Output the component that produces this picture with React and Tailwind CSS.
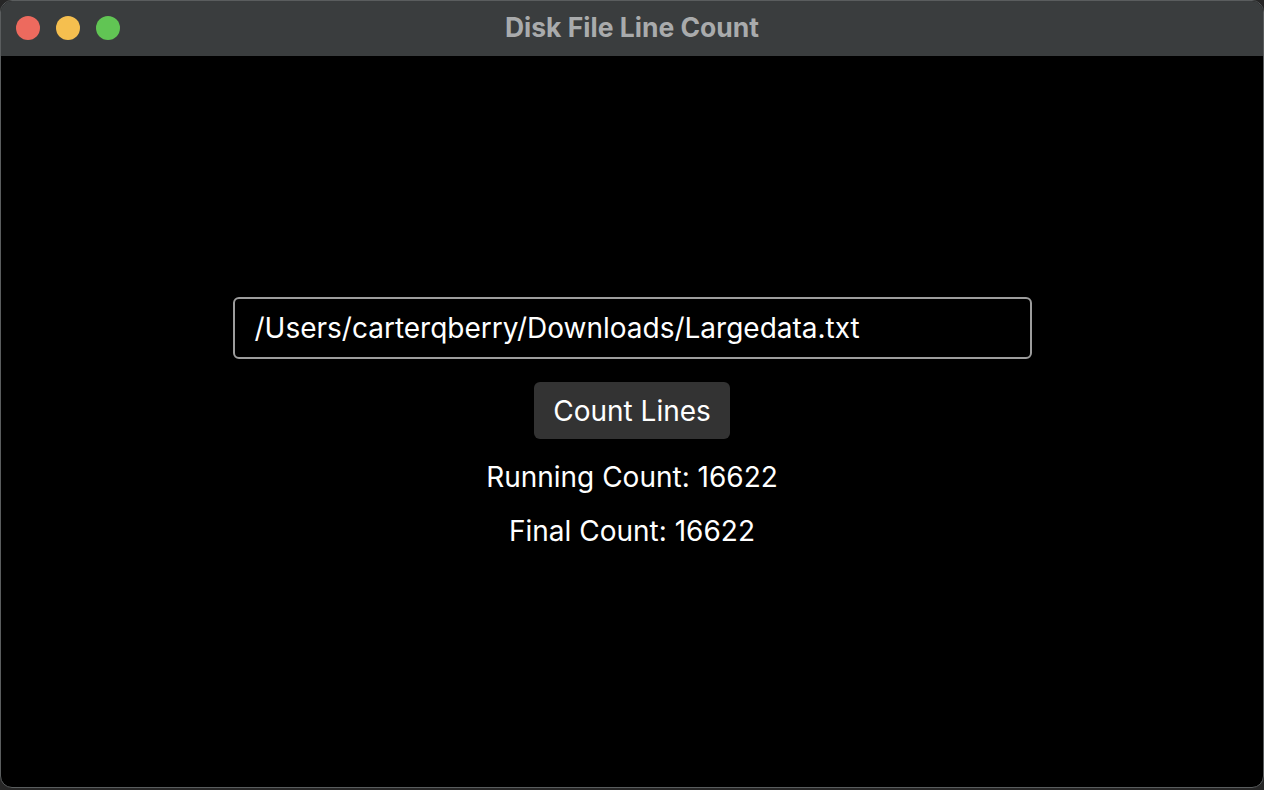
export default function App() {
  return (
    <div className="w-[1264px] h-[790px] bg-[#262626] overflow-hidden" style={{ fontFamily: "Inter, 'Noto Sans', sans-serif" }}>
      <div className="w-[1264px] h-[788px] rounded-[12px] border border-[#5a5d5e] bg-black overflow-hidden flex flex-col">
        <div className="h-[55px] shrink-0 bg-[#3a3d3e] relative flex items-center justify-center">
          <div className="absolute left-[15px] top-[15px] flex gap-[16px]">
            <div className="w-[24px] h-[24px] rounded-full bg-[#ed6a5e]" />
            <div className="w-[24px] h-[24px] rounded-full bg-[#f5bf4f]" />
            <div className="w-[24px] h-[24px] rounded-full bg-[#61c554]" />
          </div>
          <div className="text-[26.5px] font-bold text-[#a9abac] leading-none -mt-[2px]">Disk File Line Count</div>
        </div>
        <div className="flex-1 flex flex-col items-center justify-center pt-[2px] text-white">
          <div className="w-[799px] h-[62px] rounded-[6px] border-2 border-[#9d9d9d] flex items-center pl-[20px] text-[28px]">
            /Users/carterqberry/Downloads/Largedata.txt
          </div>
          <div className="mt-[23px] h-[57px] px-[19px] rounded-[6px] bg-[#333333] flex items-center text-[28px]">Count Lines</div>
          <div className="mt-[21px] text-[28px] leading-[34px]">Running Count: 16622</div>
          <div className="mt-[20px] text-[28px] leading-[34px]">Final Count: 16622</div>
        </div>
      </div>
    </div>
  );
}
